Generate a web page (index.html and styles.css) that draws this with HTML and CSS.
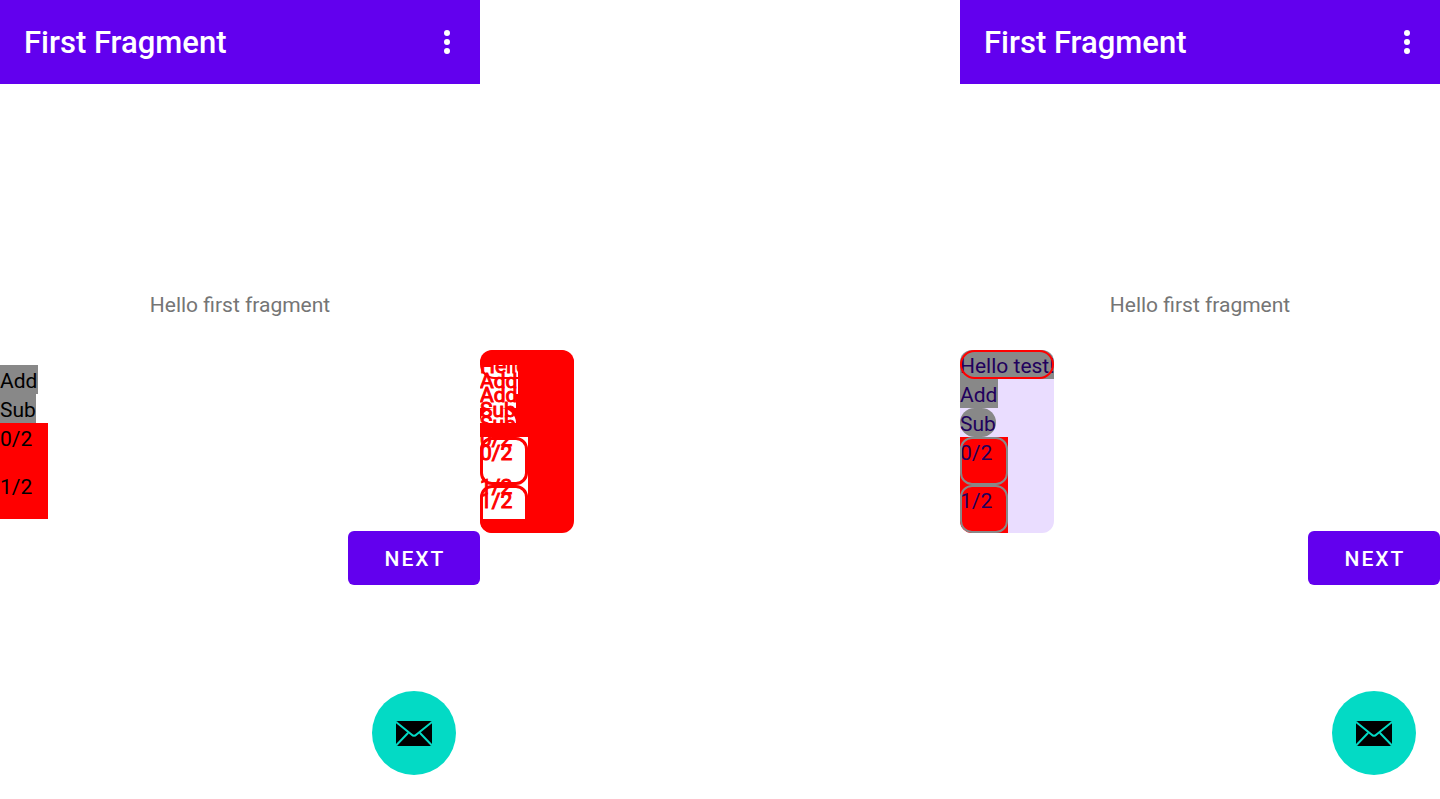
FILE: index.html
```html
<!DOCTYPE html>
<html lang="en">
<head>
<meta charset="utf-8">
<title>First Fragment</title>
<link rel="stylesheet" href="styles.css">
</head>
<body>
<div class="compare">
  <section class="screen">
    <header class="bar">
      <h1 class="title">First Fragment</h1>
      <button class="more" aria-label="More options"><svg width="36" height="36" viewBox="0 0 24 24"><path d="M12 8a2 2 0 1 0 0-4 2 2 0 0 0 0 4zm0 2a2 2 0 1 0 0 4 2 2 0 0 0 0-4zm0 6a2 2 0 1 0 0 4 2 2 0 0 0 0-4z"/></svg></button>
    </header>
    <main class="content">
      <div class="chain">
        <p class="hello">Hello first fragment</p>
        <button class="next">NEXT</button>
      </div>
      <div class="list">
        <span class="line chip add">Add</span>
        <span class="line chip">Sub</span>
        <span class="cell">0/2</span>
        <span class="cell">1/2</span>
      </div>
    </main>
    <button class="fab" aria-label="Send email"><svg width="36" height="36" viewBox="0 0 36 36"><rect y="6" width="36" height="25" rx="2" fill="#000"/><path d="M0 7L15.500 19.500Q18 22 20.500 19.500L36 7M0 30.500L12 18M36 30.500L24 18" fill="none" stroke="#03dac5" stroke-width="2"/></svg></button>
  </section>

  <section class="screen">
    <div class="bar-space"></div>
    <div class="content">
      <div class="diff">
        <div class="layer same">
          <i class="same-add"></i>
          <i class="same-sub"></i>
          <i class="same-round"></i>
          <i class="same-cells"></i>
        </div>
        <div class="layer before">
          <span class="line">Add</span>
          <span class="line">Sub</span>
          <span class="cell">0/2</span>
          <span class="cell">1/2</span>
        </div>
        <div class="layer after">
          <span class="line outlined">Hello test!</span>
          <span class="line">Add</span>
          <span class="line">Sub</span>
          <span class="cell boxed">0/2</span>
          <span class="cell boxed">1/2</span>
        </div>
      </div>
    </div>
  </section>

  <section class="screen">
    <header class="bar">
      <h1 class="title">First Fragment</h1>
      <button class="more" aria-label="More options"><svg width="36" height="36" viewBox="0 0 24 24"><path d="M12 8a2 2 0 1 0 0-4 2 2 0 0 0 0 4zm0 2a2 2 0 1 0 0 4 2 2 0 0 0 0-4zm0 6a2 2 0 1 0 0 4 2 2 0 0 0 0-4z"/></svg></button>
    </header>
    <main class="content">
      <div class="chain">
        <p class="hello">Hello first fragment</p>
        <button class="next">NEXT</button>
      </div>
      <div class="list card">
        <span class="line chip outlined">Hello test!</span>
        <span class="line chip add">Add</span>
        <span class="line chip round">Sub</span>
        <span class="cell boxed">0/2</span>
        <span class="cell boxed">1/2</span>
      </div>
    </main>
    <button class="fab" aria-label="Send email"><svg width="36" height="36" viewBox="0 0 36 36"><rect y="6" width="36" height="25" rx="2" fill="#000"/><path d="M0 7L15.500 19.500Q18 22 20.500 19.500L36 7M0 30.500L12 18M36 30.500L24 18" fill="none" stroke="#03dac5" stroke-width="2"/></svg></button>
  </section>
</div>
</body>
</html>
```

FILE: styles.css
```css
* { box-sizing: border-box; }

body {
  margin: 0;
  background: #fff;
  color: #000;
  font-family: Roboto, sans-serif;
  font-size: 21px;
}

button {
  border: 0;
  padding: 0;
  font-family: inherit;
  cursor: pointer;
}

.compare {
  display: grid;
  grid-template-columns: repeat(3, 1fr);
  min-height: 100vh;
}

.screen {
  position: relative;
  display: flex;
  flex-direction: column;
}

.bar,
.bar-space { height: 84px; }

.bar {
  display: flex;
  align-items: center;
  justify-content: space-between;
  padding: 0 15px 0 24px;
  background: #6200ee;
  color: #fff;
}

.title {
  margin: 0;
  font-size: 31px;
  font-weight: 500;
}

.more {
  display: flex;
  background: none;
}

.more svg { fill: #fff; }

.content {
  flex: 1;
  display: grid;
}

.chain {
  grid-area: 1 / 1;
  display: flex;
  flex-direction: column;
  justify-content: space-evenly;
}

.hello {
  margin: 0;
  height: 28px;
  line-height: 32px;
  text-align: center;
  color: #757575;
}

.next {
  align-self: flex-end;
  width: 132px;
  height: 54px;
  margin: 9px 0;
  padding: 2px 0 0 2px;
  border-radius: 6px;
  background: #6200ee;
  color: #fff;
  font-size: 21px;
  font-weight: 500;
  letter-spacing: 2px;
}

.list {
  grid-area: 1 / 1;
  place-self: center start;
  display: flex;
  flex-direction: column;
  align-items: flex-start;
  z-index: 1;
}

.line {
  position: relative;
  height: 29px;
  line-height: 33px;
  white-space: nowrap;
}

.chip { background: #888; }

.add { min-width: 38px; }

.cell {
  position: relative;
  width: 48px;
  height: 48px;
  line-height: 33px;
}

.list .cell { background: #f00; }

.card {
  width: 94px;
  overflow: hidden;
  border-radius: 12px;
  background: #eaddff;
  color: #21005d;
}

.outlined { width: 94px; }

.round { border-radius: 15px; }

.outlined::after,
.boxed::after {
  content: "";
  position: absolute;
  inset: 0;
  border: 2px solid #888;
  border-radius: 12px;
}

.outlined::after {
  border-color: #f00;
  border-radius: 15px;
}

.fab {
  position: absolute;
  right: 24px;
  bottom: 24px;
  display: grid;
  place-items: center;
  width: 84px;
  height: 84px;
  border-radius: 50%;
  background: #03dac5;
}

.diff {
  place-self: center start;
  display: grid;
  width: 94px;
  overflow: hidden;
  border-radius: 12px;
  background: #f00;
  color: #f00;
  -webkit-text-stroke: 1px #f00;
}

.layer {
  grid-area: 1 / 1;
  display: flex;
  flex-direction: column;
  align-items: flex-start;
}

.same,
.before { padding-top: 15px; }

.same i { background: #fff; }

.same-add {
  width: 38px;
  height: 29px;
}

.same-sub {
  width: 36px;
  height: 14px;
}

.same-round {
  width: 36px;
  height: 15px;
  margin-bottom: 14px;
  border-radius: 15px 15px 0 0;
}

.same-cells {
  width: 48px;
  height: 82px;
}

.after .boxed::after {
  border-width: 3px;
  border-color: #f00;
}
```
